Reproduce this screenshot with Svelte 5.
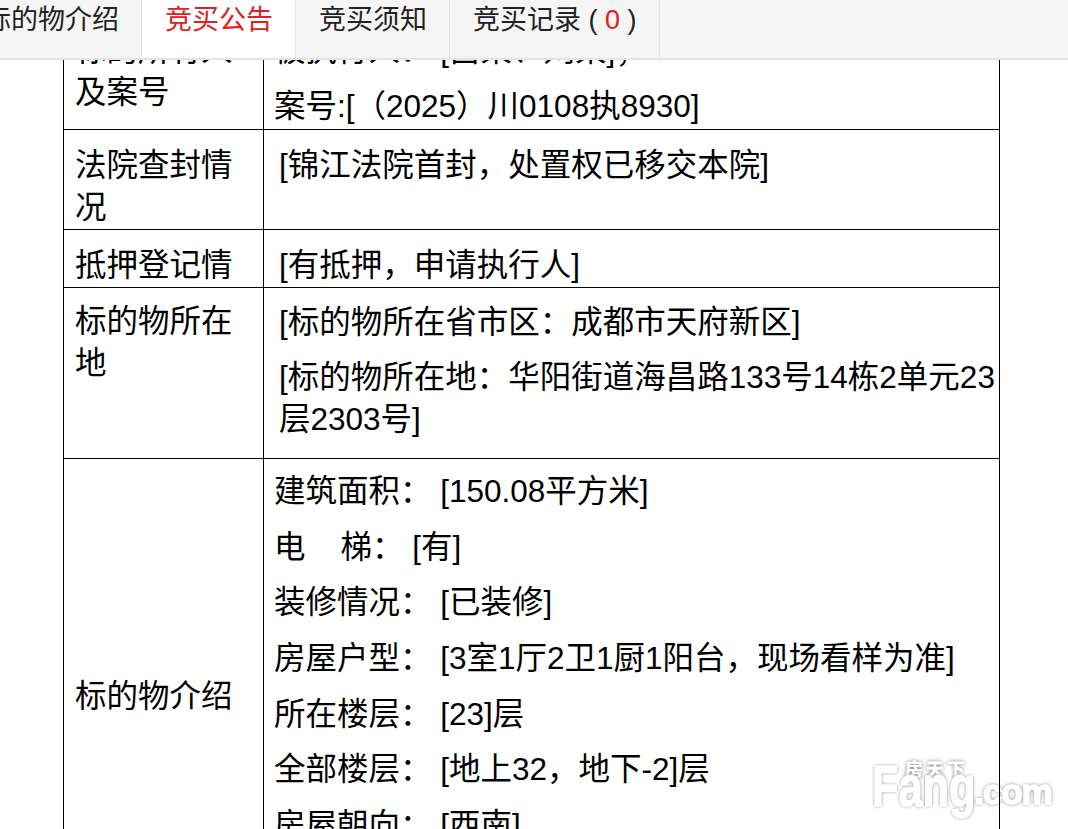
<script>
	const specs = [
		['建筑面积：', '[150.08平方米]'],
		['电\u00a0\u00a0\u00a0\u00a0梯：', '[有]'],
		['装修情况：', '[已装修]'],
		['房屋户型：', '[3室1厅2卫1厨1阳台，现场看样为准]'],
		['所在楼层：', '[23]层'],
		['全部楼层：', '[地上32，地下-2]层'],
		['房屋朝向：', '[西南]']
	];
</script>

<div class="page">
	<nav class="tabs">
		<div class="tab first">标的物介绍</div>
		<div class="tab active">竞买公告</div>
		<div class="tab">竞买须知</div>
		<div class="tab">竞买记录 ( <em>0</em> )</div>
	</nav>

	<table>
		<tbody>
			<tr>
				<td class="label">标的所有人<br />及案号</td>
				<td class="value">
					<p>被执行人：&nbsp;[吕某、刘某]；</p>
					<p>案号:[（2025）川0108执8930]</p>
				</td>
			</tr>
			<tr class="short">
				<td class="label">法院查封情况</td>
				<td class="value"><p class="in">[锦江法院首封，处置权已移交本院]</p></td>
			</tr>
			<tr class="short">
				<td class="label">抵押登记情</td>
				<td class="value"><p class="in">[有抵押，申请执行人]</p></td>
			</tr>
			<tr class="located">
				<td class="label">标的物所在地</td>
				<td class="value">
					<p class="in">[标的物所在省市区：成都市天府新区]</p>
					<p class="in">[标的物所在地：华阳街道海昌路133号14栋2单元23层2303号]</p>
				</td>
			</tr>
			<tr class="intro">
				<td class="label">标的物介绍</td>
				<td class="value">
					{#each specs as [name, val]}
						<p>{name}&nbsp;{val}</p>
					{/each}
				</td>
			</tr>
		</tbody>
	</table>

	<div class="mark">
		<span class="mark-cn">房天下</span>
		<span class="mark-en">Fang</span>
		<span class="mark-com">.com</span>
	</div>
</div>

<style>
	:global(body) {
		margin: 0;
		background: #fff;
		font-family: "Liberation Sans", "Noto Sans CJK SC", sans-serif;
		color: #000;
	}
	.page {
		position: relative;
		height: 829px;
		overflow: hidden;
	}
	.tabs {
		position: absolute;
		top: 0;
		left: 0;
		right: 0;
		height: 58px;
		display: flex;
		background: #f5f5f5;
		border-bottom: 2px solid #e4e4e4;
		z-index: 2;
		font-size: 27px;
		color: #222;
	}
	.tab {
		padding: 0 22px 0 23px;
		line-height: 41px;
		border-right: 1px solid #e4e4e4;
		white-space: nowrap;
	}
	.tab.first {
		width: 142px;
		padding: 0 22px 0 0;
		box-sizing: border-box;
		display: flex;
		justify-content: flex-end;
	}
	.tab.active {
		color: #e02020;
		background: #fff;
	}
	.tab em {
		font-style: normal;
		color: #e02020;
	}
	table {
		position: absolute;
		left: 63px;
		top: 15px;
		z-index: 1;
		width: 937px;
		border-collapse: collapse;
		table-layout: fixed;
		font-size: 31.5px;
		line-height: 42px;
		text-spacing-trim: space-all;
	}
	td {
		border: 1px solid #000;
		padding: 13px 2px 2px 10px;
		vertical-align: top;
	}
	td.label {
		width: 186px;
		padding-left: 11px;
	}
	.short td {
		padding-top: 14px;
		padding-bottom: 1px;
	}
	.located td {
		padding-top: 13px;
	}
	.located .label {
		padding-top: 12px;
	}
	.located .value {
		padding-bottom: 18px;
	}
	.intro td {
		padding-top: 11px;
	}
	.intro .label {
		vertical-align: middle;
		padding: 8px 2px 8px 11px;
	}
	.intro .value {
		padding-bottom: 87px;
	}
	p {
		margin: 0 0 13.6px;
	}
	p:last-child {
		margin-bottom: 0;
	}
	p.in {
		padding-left: 5px;
	}
	.mark {
		position: absolute;
		left: 872px;
		top: 758px;
		width: 180px;
		height: 60px;
		color: #fff;
		font-weight: 700;
		-webkit-text-stroke: 1.5px #fff;
		text-shadow: 0 0 4px #777, 0 0 2px #aaa;
		line-height: 1;
	}
	.mark span {
		position: absolute;
		white-space: nowrap;
	}
	.mark-cn {
		left: 33px;
		top: 3px;
		font-size: 18px;
		letter-spacing: 3px;
		-webkit-text-stroke-width: 0.5px;
	}
	.mark-en {
		left: 0;
		top: 0;
		font-size: 57px;
		transform: scaleX(0.76);
		transform-origin: left top;
	}
	.mark-com {
		left: 102px;
		top: 16px;
		font-size: 35px;
		letter-spacing: -1px;
	}
</style>
